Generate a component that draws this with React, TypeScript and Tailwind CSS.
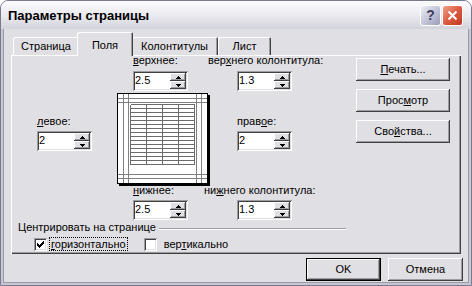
import React from "react";

const raised =
  "shadow-[inset_-1px_-1px_0_#404040,inset_1px_1px_0_#ffffff,inset_-2px_-2px_0_#9d9da1]";
const sunken =
  "shadow-[inset_1px_1px_0_#9d9da1,inset_-1px_-1px_0_#ffffff,inset_2px_2px_0_#404040,inset_-2px_-2px_0_#e0dfe3]";

function Arrow({ up }: { up?: boolean }) {
  const d = up
    ? "M2 0h1v1h-1z M1 1h3v1h-3z M0 2h5v1h-5z"
    : "M0 0h5v1h-5z M1 1h3v1h-3z M2 2h1v1h-1z";
  return (
    <svg width="5" height="3" viewBox="0 0 5 3" shapeRendering="crispEdges">
      <path d={d} fill="#000" />
    </svg>
  );
}

function Spin({ value }: { value: string }) {
  return (
    <div className={`flex h-[20px] w-[55px] bg-white ${sunken}`}>
      <div className="flex-1 pl-[2px] pt-[3px] leading-[13px]">{value}</div>
      <div className="my-[2px] mr-[2px] flex w-[16px] flex-col">
        <div className={`flex h-[8px] items-center justify-center bg-[#e0dfe3] ${raised}`}>
          <Arrow up />
        </div>
        <div className={`flex h-[8px] items-center justify-center bg-[#e0dfe3] ${raised}`}>
          <Arrow />
        </div>
      </div>
    </div>
  );
}

function Btn({ children }: { children: React.ReactNode }) {
  return (
    <div className={`flex h-[23px] w-[94px] items-center justify-center leading-[13px] ${raised}`}>
      {children}
    </div>
  );
}

function CheckBox({ checked }: { checked?: boolean }) {
  return (
    <div className={`flex h-[13px] w-[13px] shrink-0 items-center justify-center bg-white ${sunken}`}>
      {checked && (
        <svg width="7" height="7" viewBox="0 0 7 7" shapeRendering="crispEdges">
          <path
            d="M6 0h1v1h-1z M5 1h2v1h-2z M0 2h1v1h-1z M4 2h3v1h-3z M0 3h2v1h-2z M3 3h3v1h-3z M0 4h5v1h-5z M1 5h3v1h-3z M2 6h1v1h-1z"
            fill="#000"
          />
        </svg>
      )}
    </div>
  );
}

function PagePreview() {
  const rows = Array.from({ length: 16 }, (_, i) => 11.5 + i * 4);
  const cols = [13.5, 29.5, 45.5, 61.5, 77.5];
  return (
    <svg width="93" height="93" viewBox="0 0 93 93" shapeRendering="crispEdges" className="shrink-0">
      <rect x="0" y="0" width="91" height="91" fill="#fff" />
      <rect x="91" y="2" width="2" height="91" fill="#000" />
      <rect x="2" y="91" width="91" height="2" fill="#000" />
      {[6.5, 11.5, 79.5, 84.5].map((x) => (
        <line key={"v" + x} x1={x} y1="1" x2={x} y2="90" stroke="#808080" />
      ))}
      {[5.5, 9.5, 81.5, 85.5].map((y) => (
        <line key={"h" + y} x1="1" y1={y} x2="90" y2={y} stroke="#808080" />
      ))}
      {rows.map((y) => (
        <line key={"r" + y} x1="13.5" y1={y} x2="77.5" y2={y} stroke="#6b6b6b" />
      ))}
      {cols.map((x) => (
        <line key={"c" + x} x1={x} y1="11.5" x2={x} y2="71.5" stroke="#6b6b6b" />
      ))}
      <rect x="0.5" y="0.5" width="90" height="90" fill="none" stroke="#000" />
    </svg>
  );
}

function Tab({ label, w, active }: { label: string; w: string; active?: boolean }) {
  const edge =
    "shadow-[inset_1px_1px_0_#ffffff,inset_-1px_0_0_#404040,inset_-2px_0_0_#9d9da1]";
  return active ? (
    <div
      className={`relative z-10 -mx-[2px] -mb-[1px] flex h-[24px] items-start justify-center rounded-t-[2px] bg-[#e0dfe3] pt-[7px] leading-[13px] ${edge} ${w}`}
    >
      {label}
    </div>
  ) : (
    <div
      className={`flex h-[18px] items-center justify-center rounded-t-[2px] leading-[13px] ${edge} ${w}`}
    >
      {label}
    </div>
  );
}

export default function App() {
  return (
    <div className="h-[286px] w-[472px] font-['Liberation_Sans',Arial,sans-serif] text-[11px] text-black">
      <div className="flex h-full flex-col overflow-hidden rounded-t-[8px] border border-[#7a7a8e] bg-[#e0dfe3]">
        {/* title bar */}
        <div className="flex h-[28px] shrink-0 items-center bg-gradient-to-b from-[#fbfbfd] via-[#ebebf0] to-[#d3d3dc] pl-[7px] pr-[8px]">
          <span className="text-[13px] font-bold leading-[15px]">Параметры страницы</span>
          <div className="ml-auto flex gap-[1px]">
            <div className="flex h-[21px] w-[21px] items-center justify-center rounded-[3px] border border-white bg-gradient-to-br from-[#eeeef6] via-[#c4c6da] to-[#9a9cb8] text-[14px] font-bold leading-[14px] text-[#3c3c58]">
              ?
            </div>
            <div className="flex h-[21px] w-[21px] items-center justify-center rounded-[3px] border border-white bg-gradient-to-br from-[#f0a08c] via-[#dc5a40] to-[#c0381e]">
              <svg width="11" height="11" viewBox="0 0 11 11">
                <path d="M1.5 1.5 L9.5 9.5 M9.5 1.5 L1.5 9.5" stroke="#fff" strokeWidth="2" />
              </svg>
            </div>
          </div>
        </div>

        <div className="flex flex-1 flex-col border-x-[2px] border-b-[2px] border-[#c6c6d2]">
          <div className="flex flex-1 flex-col border-x border-b border-[#9a9aaa] pl-[7px] pt-[3px]">
            {/* tabs */}
            <div className="flex h-[23px] items-end pl-[2px]">
              <Tab label="Страница" w="w-[66px]" />
              <Tab label="Поля" w="w-[56px]" active />
              <Tab label="Колонтитулы" w="w-[87px]" />
              <Tab label="Лист" w="w-[53px]" />
            </div>

            {/* panel */}
            <div className="flex h-[199px] w-[450px] shadow-[inset_1px_1px_0_#ffffff,inset_-1px_-1px_0_#404040,inset_-2px_-2px_0_#9d9da1]">
              <div className="flex w-[335px] flex-col">
                <div className="flex pl-[122px]">
                  <div className="flex w-[75px] flex-col">
                    <span className="leading-[10px]">
                      <u>в</u>ерхнее:
                    </span>
                    <div className="mt-[6px]">
                      <Spin value="2.5" />
                    </div>
                  </div>
                  <div className="flex flex-col">
                    <span className="leading-[10px]">
                      вер<u>х</u>него колонтитула:
                    </span>
                    <div className="ml-[29px] mt-[6px]">
                      <Spin value="1.3" />
                    </div>
                  </div>
                </div>

                <div className="mt-[2px] flex h-[92px]">
                  <div className="ml-[26px] flex w-[80px] flex-col pt-[23px]">
                    <span className="leading-[10px]">
                      <u>л</u>евое:
                    </span>
                    <div className="mt-[5px]">
                      <Spin value="2" />
                    </div>
                  </div>
                  <PagePreview />
                  <div className="ml-[27px] flex flex-col pt-[23px]">
                    <span className="leading-[10px]">
                      прав<u>о</u>е:
                    </span>
                    <div className="mt-[5px]">
                      <Spin value="2" />
                    </div>
                  </div>
                </div>

                <div className="flex pl-[122px]">
                  <div className="flex w-[71px] flex-col">
                    <span className="leading-[10px]">
                      <u>н</u>ижнее:
                    </span>
                    <div className="mt-[5px]">
                      <Spin value="2.5" />
                    </div>
                  </div>
                  <div className="flex flex-col">
                    <span className="leading-[10px]">
                      ни<u>ж</u>него колонтитула:
                    </span>
                    <div className="ml-[33px] mt-[5px]">
                      <Spin value="1.3" />
                    </div>
                  </div>
                </div>

                <div className="mt-[2px] flex h-[10px] pl-[7px]">
                  <span className="leading-[10px]">Центрировать на странице</span>
                  <div className="ml-[3px] mt-[6px] h-[2px] flex-1 border-t border-b border-t-[#9d9da1] border-b-white" />
                </div>
                <div className="mt-[4px] flex h-[16px] items-center pl-[23px]">
                  <CheckBox checked />
                  <span className="ml-[2px] border border-dotted border-black px-[1px] leading-[12px]">
                    <u>г</u>оризонтально
                  </span>
                  <div className="ml-[16px]">
                    <CheckBox />
                  </div>
                  <span className="ml-[7px] leading-[12px]">
                    вер<u>т</u>икально
                  </span>
                </div>
              </div>

              <div className="ml-auto mr-[11px] flex flex-col gap-[8px] pt-[3px]">
                <Btn>
                  <u>П</u>ечать...
                </Btn>
                <Btn>
                  Прос<u>м</u>отр
                </Btn>
                <Btn>
                  Сво<u>й</u>ства...
                </Btn>
              </div>
            </div>

            {/* dialog buttons */}
            <div className="mt-[4px] flex justify-end gap-[7px] pr-[5px]">
              <div className="h-[23px] w-[75px] border border-black">
                <div className={`flex h-full w-full items-center justify-center leading-[13px] ${raised}`}>
                  OK
                </div>
              </div>
              <div className={`flex h-[23px] w-[75px] items-center justify-center leading-[13px] ${raised}`}>
                Отмена
              </div>
            </div>
          </div>
        </div>
      </div>
    </div>
  );
}
